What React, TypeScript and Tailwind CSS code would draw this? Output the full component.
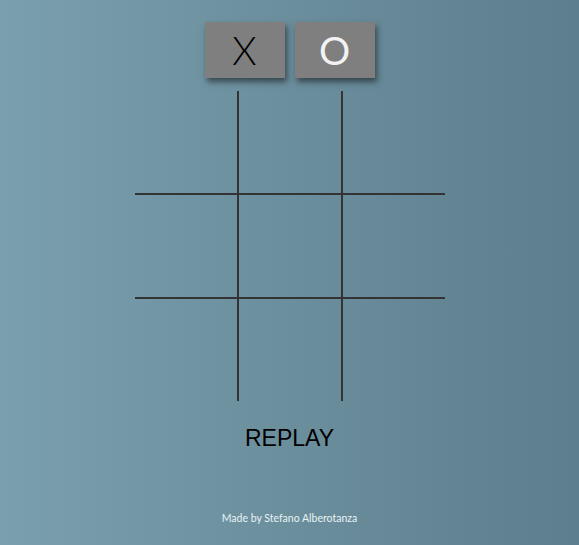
const cells = [0, 1, 2, 3, 4, 5, 6, 7, 8];

const cellBorder = [
  '',
  'border-x-2 border-[#333]',
  '',
  'border-y-2 border-[#333]',
  'border-2 border-[#333]',
  'border-y-2 border-[#333]',
  '',
  'border-x-2 border-[#333]',
  '',
];

export default function App() {
  return (
    <div className="flex h-[545px] w-full flex-col items-center bg-gradient-to-r from-[#7a9fae] to-[#5d7e8c] font-['Lato',sans-serif]">
      <div className="mt-[22px] flex gap-[10px]">
        <button className="flex h-[56px] w-[80px] items-center justify-center bg-[#7f7f7f] text-[39px] font-light leading-none text-black shadow-[2px_4px_6px_rgba(0,0,0,0.5)]">
          X
        </button>
        <button className="flex h-[56px] w-[80px] items-center justify-center bg-[#7f7f7f] text-[39px] font-normal leading-none text-[#f2f2f2] shadow-[2px_4px_6px_rgba(0,0,0,0.5)]">
          O
        </button>
      </div>

      <div className="mt-[13px] grid grid-cols-[102px_106px_102px] grid-rows-[102px_106px_102px]">
        {cells.map((i) => (
          <div key={i} className={cellBorder[i]} />
        ))}
      </div>

      <button className="mt-[26px] font-['Liberation_Sans',sans-serif] text-[23px] leading-none text-black">
        REPLAY
      </button>

      <p className="mt-[63px] text-[10.5px] leading-none text-[#e6f3f5]">
        Made by Stefano Alberotanza
      </p>
    </div>
  );
}
